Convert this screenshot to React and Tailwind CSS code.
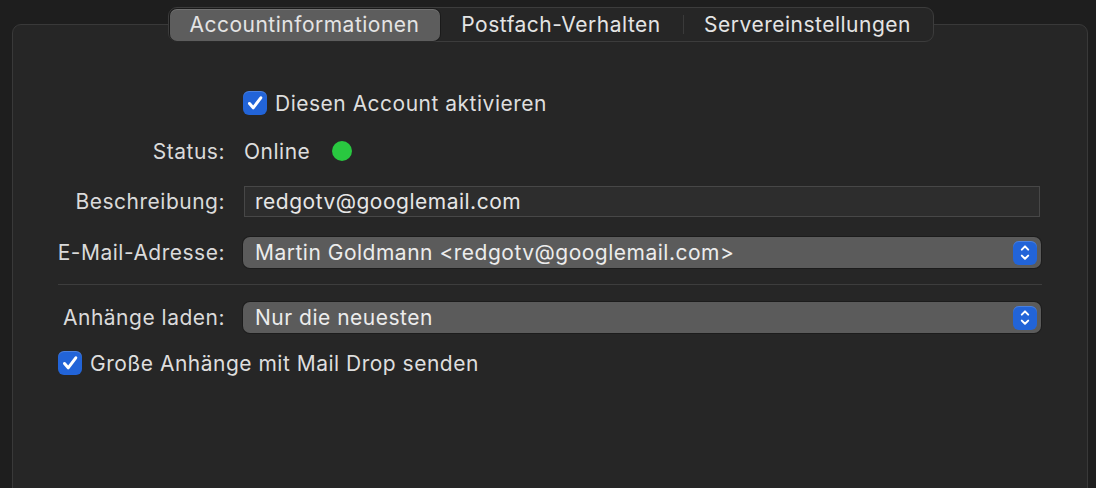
import React from "react";

function Check() {
  return (
    <div className="w-[24px] h-[24px] shrink-0 rounded-[6px] bg-[#2264d8] flex items-center justify-center shadow-[inset_0_1px_0_rgba(255,255,255,0.18)]">
      <svg width="24" height="24" viewBox="0 0 24 24">
        <path d="M6.5 12.5 L10.2 16.8 L17.8 6.8" stroke="white" strokeWidth="3" fill="none" strokeLinecap="round" strokeLinejoin="round" />
      </svg>
    </div>
  );
}

function Stepper() {
  return (
    <div className="w-[24px] h-[24px] shrink-0 rounded-[6px] bg-[#2264d8] flex items-center justify-center shadow-[inset_0_1px_0_rgba(255,255,255,0.18)]">
      <svg width="24" height="24" viewBox="0 0 24 24">
        <path d="M8.8 8.6 L12 5.4 L15.2 8.6" stroke="white" strokeWidth="2" fill="none" strokeLinecap="round" strokeLinejoin="round" />
        <path d="M8.8 14.6 L12 17.8 L15.2 14.6" stroke="white" strokeWidth="2" fill="none" strokeLinecap="round" strokeLinejoin="round" />
      </svg>
    </div>
  );
}

function Popup({ children }) {
  return (
    <div className="w-[798px] h-[31px] rounded-[7px] bg-[#5b5b5b] shadow-[0_0_0_1px_rgba(0,0,0,0.25)] flex items-center justify-between pl-[12px] pr-[4px]">
      <span className="text-[#ececec] whitespace-nowrap">{children}</span>
      <Stepper />
    </div>
  );
}

function Label({ children }) {
  return (
    <div className="w-[167px] mr-[18px] shrink-0 flex justify-end whitespace-nowrap text-[#dadada]">
      <span>{children}</span>
    </div>
  );
}

export default function App() {
  return (
    <div className="w-[1096px] h-[488px] overflow-hidden bg-[#1e1e1e] pl-[12px] pr-[8px] pt-[7px] font-['Inter','Noto_Sans',sans-serif] text-[21px] tracking-[0.5px] leading-none">
      <div className="relative z-10 flex justify-center pl-[1px]">
        <div className="h-[35px] rounded-[9px] border border-[#3c3c3c] bg-[#262626] p-[1px] flex items-center text-[#e4e4e4] whitespace-nowrap">
          <div className="w-[270px] h-[32px] rounded-[7px] bg-[#5d5d5d] shadow-[inset_0_1px_0_rgba(255,255,255,0.12),0_0_0_1px_rgba(0,0,0,0.3)] flex items-center justify-center">
            Accountinformationen
          </div>
          <div className="w-[243px] h-[32px] flex items-center justify-center">Postfach-Verhalten</div>
          <div className="w-px h-[19px] bg-[#3a3a3a]" />
          <div className="w-[248px] h-[32px] flex items-center justify-center">Servereinstellungen</div>
        </div>
      </div>
      <div className="-mt-[18px] h-[500px] rounded-t-[9px] border border-[#393939] bg-[#262626] pt-[66px] pl-[45px]">
        <div className="flex items-center h-[24px]">
          <div className="w-[185px] shrink-0" />
          <Check />
          <span className="ml-[8px] text-[#dedede]">Diesen Account aktivieren</span>
        </div>
        <div className="flex items-center h-[24px] mt-[24px]">
          <Label>Status:</Label>
          <span className="ml-[1px] text-[#dedede]">Online</span>
          <span className="ml-[22px] w-[20px] h-[20px] rounded-full bg-[#29c840]" />
        </div>
        <div className="flex items-center h-[31px] mt-[23px]">
          <Label>Beschreibung:</Label>
          <div className="ml-[1px] w-[796px] h-[31px] border border-[#474747] bg-[#2d2d2d] flex items-center pl-[10px] text-[#e6e6e6]">
            redgotv@googlemail.com
          </div>
        </div>
        <div className="flex items-center h-[31px] mt-[20px]">
          <Label>E-Mail-Adresse:</Label>
          <Popup>Martin Goldmann &lt;redgotv@googlemail.com&gt;</Popup>
        </div>
        <div className="mt-[16px] w-[984px] h-px bg-[#3d3d3d]" />
        <div className="flex items-center h-[31px] mt-[17px]">
          <Label>Anhänge laden:</Label>
          <Popup>Nur die neuesten</Popup>
        </div>
        <div className="flex items-center h-[24px] mt-[18px]">
          <Check />
          <span className="ml-[8px] text-[#dedede]">Große Anhänge mit Mail Drop senden</span>
        </div>
      </div>
    </div>
  );
}
